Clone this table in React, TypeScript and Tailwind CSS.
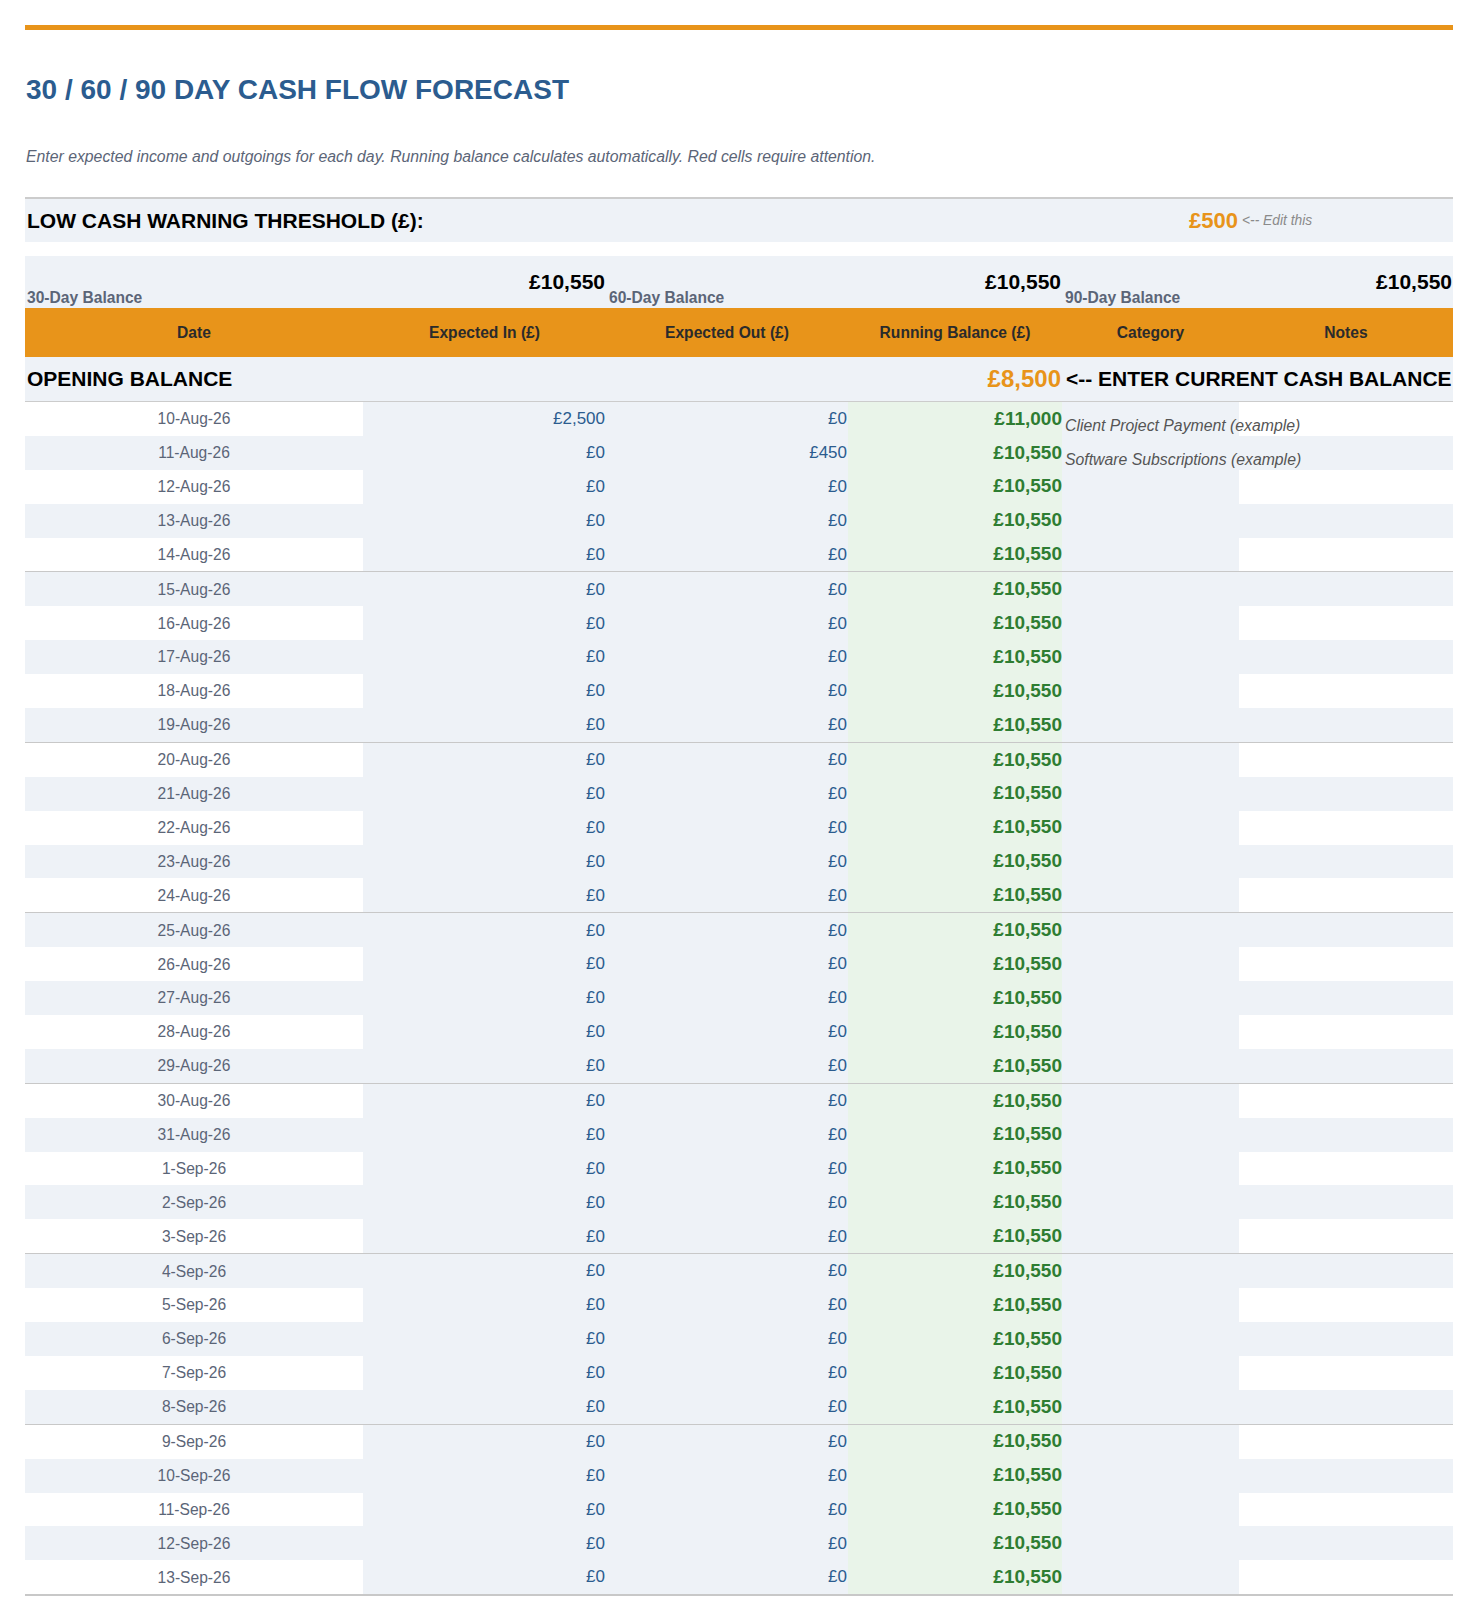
import React from "react";

const dates: string[] = [];
for (let d = 10; d <= 31; d++) dates.push(`${d}-Aug-26`);
for (let d = 1; d <= 13; d++) dates.push(`${d}-Sep-26`);

function Row({ i, date }: { i: number; date: string }) {
  const even = i % 2 === 0;
  const inV = i === 0 ? "£2,500" : "£0";
  const outV = i === 1 ? "£450" : "£0";
  const bal = i === 0 ? "£11,000" : "£10,550";
  const cat = i === 0 ? "Client Project Payment (example)" : i === 1 ? "Software Subscriptions (example)" : "";
  return (
    <div className="flex h-[33.9px]">
      <div
        className={
          even
            ? "w-[338px] shrink-0 flex items-center justify-center bg-white text-[15.6px] text-[#5b6577]"
            : "w-[338px] shrink-0 flex items-center justify-center bg-[#eef2f7] text-[15.6px] text-[#5b6577]"
        }
      >
        {date}
      </div>
      <div className="w-[243px] shrink-0 flex items-center justify-end pr-[1px] bg-[#eef2f7] text-[17px] text-[#2b5c8f]">
        {inV}
      </div>
      <div className="w-[242px] shrink-0 flex items-center justify-end pr-[1px] bg-[#eef2f7] text-[17px] text-[#2b5c8f]">
        {outV}
      </div>
      <div className="w-[214px] shrink-0 flex items-center justify-end pr-0 bg-[#e9f4e9] text-[19px] font-bold text-[#2e7d32]">
        {bal}
      </div>
      <div className="relative z-10 w-[177px] shrink-0 flex items-end pl-[3px] bg-[#eef2f7] text-[15.8px] italic text-[#555555] whitespace-nowrap overflow-visible">
        <span className="translate-y-[2px]">{cat}</span>
      </div>
      <div
        className={
          even ? "w-[214px] shrink-0 bg-white" : "w-[214px] shrink-0 bg-[#eef2f7]"
        }
      />
    </div>
  );
}

export default function App() {
  return (
    <div className="min-h-[1619px] bg-white px-[25px] pt-[25px] font-['Liberation_Sans',Arial,sans-serif]">
      <div className="h-[5px] bg-[#e8941a]" />
      <h1 className="mt-[44px] text-[28px] leading-[32px] font-bold text-[#2b5c8f] pl-[1px]">
        30 / 60 / 90 DAY CASH FLOW FORECAST
      </h1>
      <p className="mt-[42px] text-[15.8px] leading-[18px] italic text-[#5b6577] pl-[1px]">
        Enter expected income and outgoings for each day. Running balance calculates automatically. Red cells require attention.
      </p>

      {/* Threshold */}
      <div className="mt-[31px] border-t-2 border-[#cccccc] flex h-[45px] bg-[#eef2f7]">
        <div className="w-[338px] shrink-0 flex items-center pl-[2px] text-[21px] font-bold text-black whitespace-nowrap overflow-visible">
          LOW CASH WARNING THRESHOLD (£):
        </div>
        <div className="w-[243px] shrink-0" />
        <div className="w-[242px] shrink-0" />
        <div className="w-[214px] shrink-0" />
        <div className="w-[177px] shrink-0 flex items-center justify-end pr-[1px] text-[22px] font-bold text-[#e8941a]">
          £500
        </div>
        <div className="w-[214px] shrink-0 flex items-center pl-[3px] pt-[1px] text-[13.8px] italic text-[#8a8a8a]">
          &lt;-- Edit this
        </div>
      </div>

      {/* Summary */}
      <div className="mt-[14px] flex h-[52px] bg-[#eef2f7]">
        <div className="w-[338px] shrink-0 flex items-end pl-[2px] text-[15.6px] font-bold text-[#5b6577]">
          <span className="translate-y-[1px]">30-Day Balance</span>
        </div>
        <div className="w-[243px] shrink-0 flex items-center justify-end pr-[1px] text-[21px] font-bold text-black">
          £10,550
        </div>
        <div className="w-[242px] shrink-0 flex items-end pl-[3px] text-[15.6px] font-bold text-[#5b6577]">
          <span className="translate-y-[1px]">60-Day Balance</span>
        </div>
        <div className="w-[214px] shrink-0 flex items-center justify-end pr-[1px] text-[21px] font-bold text-black">
          £10,550
        </div>
        <div className="w-[177px] shrink-0 flex items-end pl-[3px] text-[15.6px] font-bold text-[#5b6577] whitespace-nowrap">
          <span className="translate-y-[1px]">90-Day Balance</span>
        </div>
        <div className="w-[214px] shrink-0 flex items-center justify-end pr-[1px] text-[21px] font-bold text-black">
          £10,550
        </div>
      </div>

      {/* Header */}
      <div className="flex h-[49px] bg-[#e8941a] text-[15.6px] font-bold text-[#2b2b2b]">
        <div className="w-[338px] shrink-0 flex items-center justify-center">Date</div>
        <div className="w-[243px] shrink-0 flex items-center justify-center">Expected In (£)</div>
        <div className="w-[242px] shrink-0 flex items-center justify-center">Expected Out (£)</div>
        <div className="w-[214px] shrink-0 flex items-center justify-center">Running Balance (£)</div>
        <div className="w-[177px] shrink-0 flex items-center justify-center">Category</div>
        <div className="w-[214px] shrink-0 flex items-center justify-center">Notes</div>
      </div>

      {/* Opening balance */}
      <div className="flex h-[45px] bg-[#eef2f7] border-b border-[#cccccc]">
        <div className="w-[338px] shrink-0 flex items-center pl-[2px] text-[21px] font-bold text-black whitespace-nowrap">
          OPENING BALANCE
        </div>
        <div className="w-[243px] shrink-0" />
        <div className="w-[242px] shrink-0" />
        <div className="w-[214px] shrink-0 flex items-center justify-end pr-[1px] text-[24px] font-bold text-[#e8941a]">
          £8,500
        </div>
        <div className="w-[177px] shrink-0 flex items-center pl-[4px] text-[21px] font-bold text-black whitespace-nowrap overflow-visible">
          &lt;-- ENTER CURRENT CASH BALANCE
        </div>
        <div className="w-[214px] shrink-0" />
      </div>

      {/* Data rows */}
      <div className="border-b-2 border-[#c8c8c8]">
        {dates.map((d, i) => (
          <React.Fragment key={d}>
            <Row i={i} date={d} />
            {i % 5 === 4 && i !== dates.length - 1 ? <div className="h-px bg-[#c8c8c8]" /> : null}
          </React.Fragment>
        ))}
      </div>
    </div>
  );
}
